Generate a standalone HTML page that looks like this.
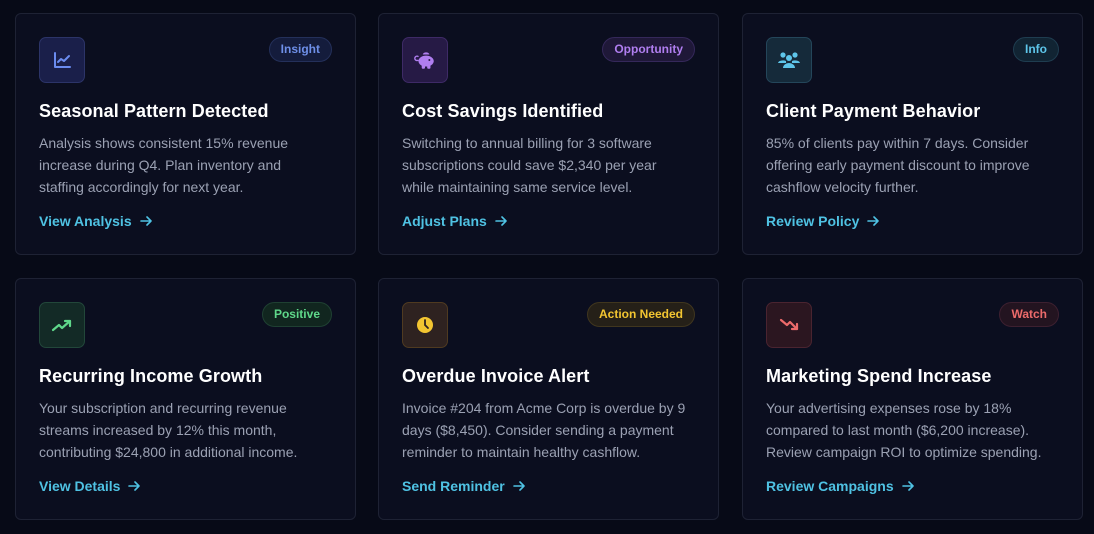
<!DOCTYPE html>
<html><head><meta charset="utf-8"><style>
*{margin:0;padding:0;box-sizing:border-box}
body{width:1094px;height:534px;background:#070a17;font-family:"Liberation Sans",sans-serif;position:relative;overflow:hidden}
.card{position:absolute;width:341px;height:242px;background:#0b0e1f;border:1px solid #1e2234;border-radius:6px}
.ic{position:absolute;left:23px;top:23px;width:46px;height:46px;border-radius:7px;border:1px solid;display:flex;align-items:center;justify-content:center}
.badge{position:absolute;right:23px;top:23px;height:25px;padding:0 11px;border-radius:13px;border:1px solid;font-size:12px;line-height:23px;font-weight:bold}
h3{position:absolute;left:23px;top:87px;font-size:18px;color:#fff;font-weight:bold;letter-spacing:0.1px}
p{position:absolute;left:23px;top:118px;white-space:nowrap;font-size:14px;line-height:22px;color:#9ba1b3}
a{position:absolute;left:23px;top:199px;font-size:14px;color:#4fc2e3;font-weight:bold;text-decoration:none;display:flex;align-items:center}
a svg{margin-left:8px}
</style></head><body>

<div class="card" style="left:15px;top:13px">
<div class="ic" style="background:#1a1f4a;border-color:#2c3468"><svg width="20" height="20" viewBox="0 0 20 20" fill="none" stroke="#6b8cf0" stroke-width="2" stroke-linecap="round" stroke-linejoin="round"><path d="M3 3v14h15"/><path d="M6 12l3-3 3 2 5-5"/></svg></div>
<div class="badge" style="color:#6e8fe8;background:#141c3c;border-color:#24305a">Insight</div>
<h3>Seasonal Pattern Detected</h3>
<p>Analysis shows consistent 15% revenue<br>increase during Q4. Plan inventory and<br>staffing accordingly for next year.</p>
<a>View Analysis<svg width="12" height="12" viewBox="0 0 12 12" fill="none" stroke="#4fc2e3" stroke-width="1.6" stroke-linecap="round" stroke-linejoin="round"><path d="M1 6h10M7 2l4 4-4 4"/></svg></a>
</div>

<div class="card" style="left:378px;top:13px">
<div class="ic" style="background:#261a45;border-color:#3e2a66"><svg width="24" height="22" viewBox="0 0 22 20" fill="#b07ef0"><ellipse cx="12" cy="11" rx="7" ry="5"/><rect x="8" y="13" width="3" height="5" rx="1"/><rect x="13" y="13" width="3" height="5" rx="1"/><path d="M9 5a3 2 0 0 1 6 0z"/><path d="M5 10a2 2 0 1 1 0-3" stroke="#b07ef0" stroke-width="1.3" fill="none"/><circle cx="15" cy="10" r="0.9" fill="#261a45"/></svg></div>
<div class="badge" style="color:#b07ef0;background:#1f1838;border-color:#35285a">Opportunity</div>
<h3>Cost Savings Identified</h3>
<p>Switching to annual billing for 3 software<br>subscriptions could save $2,340 per year<br>while maintaining same service level.</p>
<a>Adjust Plans<svg width="12" height="12" viewBox="0 0 12 12" fill="none" stroke="#4fc2e3" stroke-width="1.6" stroke-linecap="round" stroke-linejoin="round"><path d="M1 6h10M7 2l4 4-4 4"/></svg></a>
</div>

<div class="card" style="left:742px;top:13px">
<div class="ic" style="background:#152a3a;border-color:#24465a"><svg width="24" height="20" viewBox="0 0 24 20" fill="#5ec6ea"><circle cx="6" cy="5" r="2.6"/><circle cx="18" cy="5" r="2.6"/><circle cx="12" cy="8" r="3"/><path d="M1 13a5 3 0 0 1 8-2v2H1z"/><path d="M15 11a5 3 0 0 1 8 2h-8z"/><path d="M6 18a6 5 0 0 1 12 0z"/></svg></div>
<div class="badge" style="color:#5ec6ea;background:#112433;border-color:#1f3d50">Info</div>
<h3>Client Payment Behavior</h3>
<p>85% of clients pay within 7 days. Consider<br>offering early payment discount to improve<br>cashflow velocity further.</p>
<a>Review Policy<svg width="12" height="12" viewBox="0 0 12 12" fill="none" stroke="#4fc2e3" stroke-width="1.6" stroke-linecap="round" stroke-linejoin="round"><path d="M1 6h10M7 2l4 4-4 4"/></svg></a>
</div>

<div class="card" style="left:15px;top:278px">
<div class="ic" style="background:#132a26;border-color:#22473a"><svg width="22" height="20" viewBox="0 0 22 20" fill="none" stroke="#5fd88a" stroke-width="2.2" stroke-linecap="round" stroke-linejoin="round"><path d="M2 15l6-5 3 3 8-7"/><path d="M14 6h5v5"/></svg></div>
<div class="badge" style="color:#5fd88a;background:#11261f;border-color:#1f4032">Positive</div>
<h3>Recurring Income Growth</h3>
<p>Your subscription and recurring revenue<br>streams increased by 12% this month,<br>contributing $24,800 in additional income.</p>
<a>View Details<svg width="12" height="12" viewBox="0 0 12 12" fill="none" stroke="#4fc2e3" stroke-width="1.6" stroke-linecap="round" stroke-linejoin="round"><path d="M1 6h10M7 2l4 4-4 4"/></svg></a>
</div>

<div class="card" style="left:378px;top:278px">
<div class="ic" style="background:#2e2220;border-color:#4f3a20"><svg width="20" height="20" viewBox="0 0 20 20"><circle cx="10" cy="10" r="8" fill="#f2c531"/><path d="M10 5v5l3 3" stroke="#2e2220" stroke-width="1.8" fill="none" stroke-linecap="round"/></svg></div>
<div class="badge" style="color:#f2c531;background:#252018;border-color:#40361e">Action Needed</div>
<h3>Overdue Invoice Alert</h3>
<p>Invoice #204 from Acme Corp is overdue by 9<br>days ($8,450). Consider sending a payment<br>reminder to maintain healthy cashflow.</p>
<a>Send Reminder<svg width="12" height="12" viewBox="0 0 12 12" fill="none" stroke="#4fc2e3" stroke-width="1.6" stroke-linecap="round" stroke-linejoin="round"><path d="M1 6h10M7 2l4 4-4 4"/></svg></a>
</div>

<div class="card" style="left:742px;top:278px">
<div class="ic" style="background:#2b1620;border-color:#4a2430"><svg width="22" height="20" viewBox="0 0 22 20" fill="none" stroke="#ec6b6b" stroke-width="2.2" stroke-linecap="round" stroke-linejoin="round"><path d="M3 5l6 5 3-3 7 7"/><path d="M14 14h5V9"/></svg></div>
<div class="badge" style="color:#ec6b6b;background:#231420;border-color:#3d2030">Watch</div>
<h3>Marketing Spend Increase</h3>
<p>Your advertising expenses rose by 18%<br>compared to last month ($6,200 increase).<br>Review campaign ROI to optimize spending.</p>
<a>Review Campaigns<svg width="12" height="12" viewBox="0 0 12 12" fill="none" stroke="#4fc2e3" stroke-width="1.6" stroke-linecap="round" stroke-linejoin="round"><path d="M1 6h10M7 2l4 4-4 4"/></svg></a>
</div>

</body></html>
